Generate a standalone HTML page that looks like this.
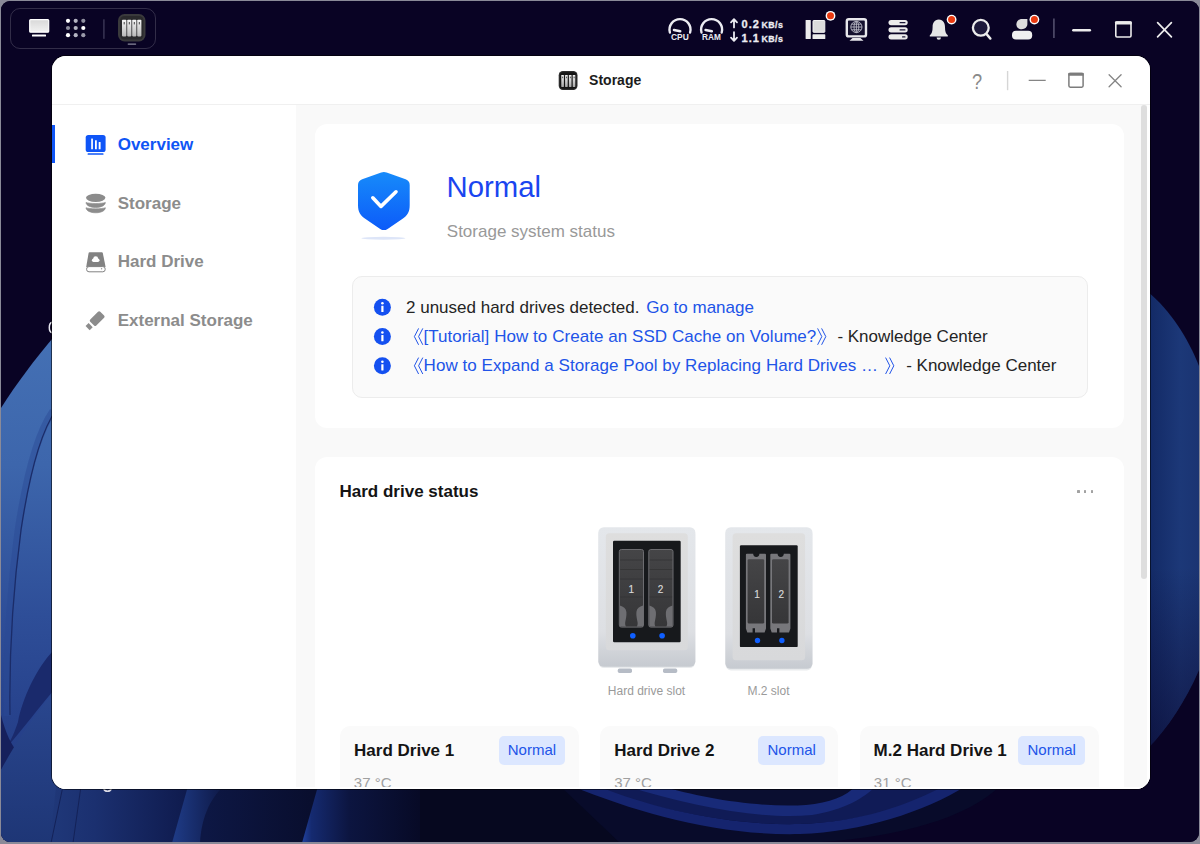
<!DOCTYPE html>
<html>
<head>
<meta charset="utf-8">
<title>Storage</title>
<style>
*{box-sizing:border-box;margin:0;padding:0}
html,body{width:1200px;height:844px;overflow:hidden;background:#8a8a98;font-family:"Liberation Sans",sans-serif}
#frame{position:absolute;left:1px;top:1px;width:1198px;height:841px;border-radius:9px;background:#08031f;overflow:hidden}
#wall{position:absolute;left:0;top:0;width:1198px;height:841px}
.abs{position:absolute}
/* top bar */
#lgroup{position:absolute;left:9px;top:7.4px;width:146.4px;height:40.6px;border:1px solid rgba(255,255,255,.17);border-radius:10px}
/* dialog */
#dlg{position:absolute;left:50.5px;top:55px;width:1098px;height:732.7px;border-radius:14px;background:#fff;overflow:hidden;box-shadow:0 0 0 1px rgba(0,0,0,.55)}
#tbar{position:absolute;left:0;top:0;width:100%;height:49px;background:#fff;border-bottom:1px solid #f0f0f0}
/* #pg uses page coordinates */
#pg{position:absolute;left:-51.5px;top:-56px;width:1200px;height:844px}
#side{position:absolute;left:51.5px;top:105px;width:244.5px;height:690px;background:#fff}
#main{position:absolute;left:296px;top:105px;width:854px;height:690px;background:#f9f9f9}
.nav{position:absolute;left:117.7px;font-size:17px;font-weight:700;color:#8c8c8c;line-height:20px;white-space:nowrap}
.nav.on{color:#0f55f5}
.card{position:absolute;background:#fff;border-radius:12px}
.t{position:absolute;white-space:nowrap;line-height:20px;font-size:17px;color:#242424}
.lnk{color:#2154e8}
.dcard{position:absolute;top:726px;width:238.6px;height:80px;background:#fafafa;border-radius:10px}
.badge{position:absolute;top:735.7px;width:66.6px;height:29.2px;border-radius:5px;background:#dce7ff;color:#2154e8;font-size:15px;line-height:27.6px;text-align:center}
.dt{font-weight:700;color:#141414}
.tmp{font-size:15px;color:#a0a0a0}
.lbl{font-size:12px;color:#9a9a9a;line-height:14px;text-align:center}
</style>
</head>
<body>
<div id="frame">
<svg id="wall" viewBox="1 1 1198 841">
<defs>
<linearGradient id="wl" x1="0" y1="339" x2="0" y2="842" gradientUnits="userSpaceOnUse"><stop offset="0" stop-color="#4470b4"/><stop offset=".25" stop-color="#3d66ac"/><stop offset=".55" stop-color="#2e4e98"/><stop offset=".75" stop-color="#27428c"/><stop offset="1" stop-color="#1f3678"/></linearGradient>
<linearGradient id="wl2" x1="0" y1="0" x2="1" y2="0"><stop offset="0" stop-color="#1a2e6c" stop-opacity=".55"/><stop offset="1" stop-color="#1a2e6c" stop-opacity="0"/></linearGradient>
<linearGradient id="wr" x1="1150" y1="0" x2="1200" y2="0" gradientUnits="userSpaceOnUse"><stop offset="0" stop-color="#132a66"/><stop offset=".6" stop-color="#1c3878"/><stop offset="1" stop-color="#1a3472"/></linearGradient>
<linearGradient id="wrv" x1="0" y1="293" x2="0" y2="750" gradientUnits="userSpaceOnUse"><stop offset="0" stop-color="#0a0428" stop-opacity="0"/><stop offset=".6" stop-color="#0a0428" stop-opacity="0"/><stop offset="1" stop-color="#0a0428" stop-opacity=".55"/></linearGradient>
<linearGradient id="wf" x1="0" y1="690" x2="0" y2="842" gradientUnits="userSpaceOnUse"><stop offset="0" stop-color="#2a478f"/><stop offset="1" stop-color="#1e3676"/></linearGradient>
<linearGradient id="b1" x1="55" y1="0" x2="185" y2="0" gradientUnits="userSpaceOnUse"><stop offset="0" stop-color="#1f3778"/><stop offset=".3" stop-color="#1b3070"/><stop offset="1" stop-color="#0f1b4e"/></linearGradient>
<linearGradient id="b2" x1="175" y1="0" x2="225" y2="0" gradientUnits="userSpaceOnUse"><stop offset="0" stop-color="#1e3a84"/><stop offset="1" stop-color="#0d1744"/></linearGradient>
<linearGradient id="b3" x1="205" y1="0" x2="310" y2="0" gradientUnits="userSpaceOnUse"><stop offset="0" stop-color="#0d1744"/><stop offset="1" stop-color="#090e2e"/></linearGradient>
<linearGradient id="b4" x1="302" y1="0" x2="420" y2="0" gradientUnits="userSpaceOnUse"><stop offset="0" stop-color="#2142a0"/><stop offset=".08" stop-color="#152a70"/><stop offset=".4" stop-color="#0c1540"/><stop offset="1" stop-color="#070a26"/></linearGradient>
</defs>
<rect x="1" y="1" width="1198" height="841" fill="#090324"/>
<!-- left petal -->
<path d="M52 339 C36 358 16 384 1 408 V842 H60 V339 Z" fill="url(#wl)"/>
<path d="M53 411 C39 431 27 471 18 531 C10 591 6 651 7 716" fill="none" stroke="#2a4a94" stroke-width="7" opacity=".45"/>
<path d="M56 410 C42 430 30 470 21 530 C13 590 9 650 10 715" fill="none" stroke="#1b2c68" stroke-width="1.3"/>
<path d="M54 650 C36 668 22 700 18 722 C14 734 10 742 6 748 C24 728 40 706 54 690 Z" fill="#1a2a6c"/>
<path d="M1 715 C6 735 12 745 16 750 L1 770 Z" fill="#16205c"/>
<path d="M1 770 C14 745 36 712 56 690 V842 H1 Z" fill="url(#wf)"/>
<!-- bottom strip -->

<path d="M56 786 H190 L176 843 H50 Z" fill="url(#b1)"/>
<path d="M63 786 L51 843 M81 786 L73 843" stroke="#142258" stroke-width="1" fill="none"/>
<path d="M188 786 H230 V843 H172 Z" fill="url(#b2)"/>
<path d="M224 786 C208 800 201 822 200 843 H320 V786 Z" fill="url(#b3)"/>
<path d="M318 786 L302 843 H620 V786 Z" fill="url(#b4)"/>
<rect x="420" y="786" width="300" height="57" fill="#06081f"/>
<path d="M560 786 H1000 C960 826 860 846 760 843 H620 Z" fill="#080b2a"/>
<path d="M590 786 C650 808 730 826 800 824 C860 822 915 806 950 786 Z" fill="#101b56"/>
<path d="M572 786 C640 814 720 836 800 834 C862 832 924 812 966 786 H944 C906 806 860 822 800 824 C730 826 650 808 598 786 Z" fill="#15246e"/>
<path d="M640 786 C700 802 760 812 806 808 C836 804 854 796 864 786 Z" fill="#0a0e30"/>
<path d="M626 786 C690 806 760 820 812 815 C844 810 864 798 876 786 H856 C846 796 830 803 806 805 C760 808 700 798 662 786 Z" fill="#182a78"/>
<path d="M52 322.2 C48.4 323.4 48.4 331.6 52 332.8" fill="none" stroke="#e6e6ee" stroke-width="1.5"/>
<path d="M103.8 788.5 C104.6 792.2 110.4 792.2 111.2 788.5" fill="none" stroke="#dcdce6" stroke-width="1.6"/>
<!-- right petal -->
<path d="M1148 292 C1170 310 1188 338 1199 366 V670 C1186 700 1168 728 1148 748 Z" fill="url(#wr)"/>
<path d="M1148 292 C1170 310 1188 338 1199 366 V670 C1186 700 1168 728 1148 748 Z" fill="url(#wrv)"/>
</svg>

<div id="lgroup"></div>
<svg class="abs" style="left:0;top:0" width="1198" height="55" viewBox="1 1 1198 55">
<defs>
<linearGradient id="gm" x1="0" y1="0" x2="0" y2="1"><stop offset="0" stop-color="#d8d8d8"/><stop offset="1" stop-color="#f2f2f2"/></linearGradient>
<linearGradient id="gbay" x1="0" y1="0" x2="0" y2="1"><stop offset="0" stop-color="#f4f4f4"/><stop offset="1" stop-color="#b8b8b8"/></linearGradient>
</defs>
<!-- monitor -->
<rect x="29.7" y="19.6" width="19" height="12.6" rx="1" fill="url(#gm)" stroke="#fff" stroke-width="1.2"/>
<rect x="32" y="34.4" width="14" height="2" rx=".5" fill="#fff"/>
<!-- dots -->
<g>
<circle cx="68" cy="20.8" r="2.1" fill="#fff"/><circle cx="75.7" cy="20.8" r="2.1" fill="#b4b4c2"/><circle cx="83.3" cy="20.8" r="2.1" fill="#8e8e9e"/>
<circle cx="68" cy="28" r="2.1" fill="#8e8e9e"/><circle cx="75.7" cy="28" r="2.1" fill="#b4b4c2"/><circle cx="83.3" cy="28" r="2.1" fill="#fff"/>
<circle cx="68" cy="35.2" r="2.1" fill="#fff"/><circle cx="75.7" cy="35.2" r="2.1" fill="#b4b4c2"/><circle cx="83.3" cy="35.2" r="2.1" fill="#9a9aaa"/>
</g>
<rect x="103.2" y="19.3" width="1.4" height="19.5" fill="#3c3856"/>
<!-- app icon -->
<rect x="118" y="14" width="27.5" height="27.5" rx="6.5" fill="#3a3a3c"/>
<rect x="120" y="16" width="23.5" height="23.5" rx="4.5" fill="#2a2a2c"/>
<g fill="url(#gbay)">
<rect x="122" y="19.8" width="4.4" height="16.6" rx=".8"/><rect x="127.2" y="19.8" width="4.2" height="16.6" rx=".8"/><rect x="132.2" y="19.8" width="4.2" height="16.6" rx=".8"/><rect x="137.2" y="19.8" width="4.2" height="16.6" rx=".8"/>
</g>
<g fill="#444"><rect x="123.7" y="22" width="1" height="2.4"/><rect x="128.8" y="22" width="1" height="2.4"/><rect x="133.8" y="22" width="1" height="2.4"/><rect x="138.8" y="22" width="1" height="2.4"/></g>
<rect x="127.6" y="43.4" width="8.6" height="1.3" rx=".6" fill="#8a8a9c"/>

<!-- CPU / RAM gauges -->
<g fill="none" stroke="#ececf2" stroke-linecap="round">
<path d="M669.9 32.5 A10.5 10.5 0 1 1 690.1 32.5" stroke-width="2.4"/>
<path d="M674 30 L680.2 31.2" stroke-width="2.6"/>
<path d="M701.5 32.5 A10.5 10.5 0 1 1 721.7 32.5" stroke-width="2.4"/>
<path d="M705.6 30 L711.8 31.2" stroke-width="2.6"/>
</g>
<g font-family="Liberation Sans, sans-serif" font-weight="700" fill="#ececf2">
<text x="671" y="40" font-size="8.6" textLength="17.8" lengthAdjust="spacingAndGlyphs">CPU</text>
<text x="702" y="40" font-size="8.6" textLength="18.8" lengthAdjust="spacingAndGlyphs">RAM</text>
<g stroke="#ececf2" stroke-width=".3"><text x="741.6" y="28" font-size="11" letter-spacing="1">0.2</text>
<text x="761.6" y="28" font-size="8.8" textLength="21.2" lengthAdjust="spacing">KB/s</text>
<text x="741.6" y="42" font-size="11" letter-spacing="1">1.1</text>
<text x="761.6" y="42" font-size="8.8" textLength="21.2" lengthAdjust="spacing">KB/s</text></g>
</g>
<g fill="none" stroke="#ececf2" stroke-width="1.8" stroke-linecap="round" stroke-linejoin="round">
<path d="M734 27.4 V19.4 M731 22.4 L734 19.2 L737 22.4"/>
<path d="M734 32.2 V40.4 M731 37.6 L734 40.8 L737 37.6"/>
</g>

<!-- layout icon -->
<rect x="805.6" y="20" width="5.2" height="19" rx=".6" fill="#ececec"/>
<rect x="813" y="20.5" width="11.8" height="11.8" rx=".6" fill="#dcdcdc" stroke="#f2f2f2" stroke-width="1"/>
<rect x="812.5" y="34.3" width="12.8" height="4.7" rx=".6" fill="#ececec"/>
<circle cx="830.5" cy="15.8" r="4.9" fill="#fff"/><circle cx="830.5" cy="15.8" r="3.5" fill="#ea3a10"/>
<!-- monitor globe -->
<rect x="846.8" y="19.2" width="19.2" height="17.2" rx="2" fill="#14102e" stroke="#e8e8ec" stroke-width="2.4"/>
<path d="M849.5 40.8 L852.5 38 H860.5 L863.5 40.8 Z" fill="#e8e8ec"/>
<g fill="none" stroke="#b8b8c4" stroke-width=".9"><circle cx="856.4" cy="27" r="5.6"/><ellipse cx="856.4" cy="27" rx="2.4" ry="5.6"/><path d="M850.8 27 H862 M856.4 21.4 V32.6 M851.6 24.2 H861.2 M851.6 29.8 H861.2"/></g>
<!-- server -->
<g fill="#ececec"><rect x="888.5" y="20" width="19.2" height="5.2" rx="2.6"/><rect x="888.5" y="27.2" width="19.2" height="5.2" rx="2.6"/><rect x="888.5" y="34.2" width="19.2" height="5.2" rx="2.6"/></g>
<g fill="#1c1838"><rect x="899.5" y="22" width="6" height="1.3" rx=".6"/><rect x="899.5" y="29.2" width="6" height="1.3" rx=".6"/><rect x="902" y="36.2" width="3.5" height="1.3" rx=".6"/></g>
<!-- bell -->
<path d="M938.8 19.6 C934.2 19.6 932.6 23.6 932.6 27 C932.6 31.5 931.8 33.6 929.8 35.2 V36.4 H947.8 V35.2 C945.8 33.6 945 31.5 945 27 C945 23.6 943.4 19.6 938.8 19.6 Z" fill="#e6e6e6"/>
<path d="M936.6 37.6 H941 A2.2 2.2 0 0 1 936.6 37.6 Z" fill="#e6e6e6"/>
<circle cx="951.6" cy="19.6" r="4.9" fill="#fff"/><circle cx="951.6" cy="19.6" r="3.5" fill="#ea3a10"/>
<!-- search -->
<circle cx="980.8" cy="27.8" r="7.9" fill="#1e1a3c" stroke="#ececec" stroke-width="2.3"/>
<path d="M986.8 34.4 L990.4 38.6" stroke="#ececec" stroke-width="2.4" stroke-linecap="round"/>
<!-- user -->
<path d="M1016.4 24.4 C1016.4 21.2 1018.8 19 1022 19 H1027.4 V23.8 C1027.4 27 1025 29.2 1021.8 29.2 C1018.6 29.2 1016.4 27.4 1016.4 24.4 Z" fill="#dcdcdc"/>
<rect x="1012" y="30.8" width="20.2" height="8.8" rx="4" fill="#f0f0f0"/>
<circle cx="1034.4" cy="19.6" r="4.9" fill="#fff"/><circle cx="1034.4" cy="19.6" r="3.5" fill="#ea3a10"/>
<rect x="1053" y="18.5" width="1.8" height="19.5" fill="#4a4664"/>
<!-- window ctrls -->
<path d="M1073.4 30.2 H1089.8" stroke="#ececec" stroke-width="2.6" stroke-linecap="round"/>
<rect x="1115.8" y="22" width="15.2" height="15" rx="1.2" fill="none" stroke="#ececec" stroke-width="1.6"/>
<rect x="1115" y="21.2" width="16.8" height="3.4" rx="1" fill="#ececec"/>
<path d="M1157.6 22.6 L1171.4 36.8 M1171.4 22.6 L1157.6 36.8" stroke="#ececec" stroke-width="1.7" stroke-linecap="round"/>
</svg>

<div id="dlg">
  <div id="tbar">
<svg class="abs" style="left:0;top:0" width="1098" height="48" viewBox="51.5 56 1098 48">
<defs><linearGradient id="gbay2" x1="0" y1="0" x2="0" y2="1"><stop offset="0" stop-color="#f2f2f2"/><stop offset="1" stop-color="#a8a8a8"/></linearGradient></defs>
<rect x="558.2" y="71" width="18.8" height="19" rx="4.2" fill="#2e2e2e"/>
<rect x="559.4" y="72.2" width="16.4" height="16.6" rx="3" fill="#141414"/>
<g fill="url(#gbay2)"><rect x="560.8" y="75" width="2.6" height="12" rx=".4"/><rect x="564.6" y="75" width="2.6" height="12" rx=".4"/><rect x="568.4" y="75" width="2.6" height="12" rx=".4"/><rect x="572.2" y="75" width="2.6" height="12" rx=".4"/></g>
<g fill="#333"><rect x="561.8" y="76.6" width=".8" height="1.6"/><rect x="565.6" y="76.6" width=".8" height="1.6"/><rect x="569.4" y="76.6" width=".8" height="1.6"/><rect x="573.2" y="76.6" width=".8" height="1.6"/></g>
<text x="588.6" y="85.4" font-family="Liberation Sans, sans-serif" font-size="14" font-weight="700" fill="#1c1c1c">Storage</text>
<text transform="translate(971.6 88.8) scale(.82 1)" font-family="Liberation Sans, sans-serif" font-size="22.2" fill="#8a8a8a">?</text>
<rect x="1006.4" y="71" width="1.4" height="19.2" fill="#d6d6d6"/>
<path d="M1028.2 80.4 H1045.2" stroke="#858585" stroke-width="1.4"/>
<rect x="1068.4" y="73.6" width="14.2" height="13.6" rx="1.4" fill="none" stroke="#7c7c7c" stroke-width="1.5"/>
<rect x="1067.7" y="72.8" width="15.6" height="3" rx="1" fill="#7c7c7c"/>
<path d="M1108.6 74.8 L1120.6 86.8 M1120.6 74.8 L1108.6 86.8" stroke="#858585" stroke-width="1.3" stroke-linecap="round"/>
</svg>
</div>
  <div id="pg">
  <div id="side"></div>
  <div id="main"></div>
  <!-- sidebar -->
  <div class="abs" style="left:51.5px;top:125px;width:3px;height:38.4px;background:#0f55f5"></div>
  <div class="nav on" style="top:135px">Overview</div>
  <div class="nav" style="top:194px">Storage</div>
  <div class="nav" style="top:252px">Hard Drive</div>
  <div class="nav" style="top:311px">External Storage</div>
  <svg class="abs" style="left:80px;top:125px" width="32" height="215" viewBox="80 125 32 215">
    <rect x="85.7" y="135" width="19.9" height="17" rx="2.6" fill="#0f55f7"/>
    <rect x="91.2" y="138.6" width="1.7" height="10.6" rx=".3" fill="#fff"/><rect x="95" y="140.2" width="1.8" height="9" rx=".3" fill="#fff"/><rect x="98.7" y="141.9" width="1.9" height="7.3" rx=".3" fill="#fff"/>
    <rect x="87.6" y="153.3" width="15.9" height="1.4" rx=".5" fill="#0f55f7"/>
    <g fill="#8c8c8c">
      <ellipse cx="95.7" cy="197.8" rx="9.7" ry="4.1"/>
      <path d="M86 202.4 C86 205.4 90.4 207.5 95.7 207.5 C101 207.5 105.4 205.4 105.4 202.4 C103.8 203 99.8 203.5 95.7 203.5 C91.6 203.5 87.6 203 86 202.4 Z" stroke="#8c8c8c" stroke-width=".6"/>
      <path d="M86 207.7 C86 210.7 90.4 212.8 95.7 212.8 C101 212.8 105.4 210.7 105.4 207.7 C103.8 208.3 99.8 208.8 95.7 208.8 C91.6 208.8 87.6 208.3 86 207.7 Z" stroke="#8c8c8c" stroke-width=".6"/>
    </g>
    <path d="M89.6 252.2 H101.8 Q102.6 252.2 102.8 253 L105.6 267 H86.2 L88.6 253 Q88.8 252.2 89.6 252.2 Z" fill="#828282"/>
    <rect x="86.6" y="266.6" width="18.6" height="5.2" rx="2.4" fill="#fff" stroke="#828282" stroke-width="1"/>
    <circle cx="101.6" cy="268.8" r=".7" fill="#999"/>
    <g fill="#fff"><circle cx="95.7" cy="258.6" r="2.4"/><circle cx="93.6" cy="260.3" r="1.7"/><circle cx="97.8" cy="260.3" r="1.7"/><rect x="93.4" y="259.6" width="4.6" height="2.4"/></g>
    <g transform="translate(97.1 318.7) rotate(-45)" fill="#8c8c8c"><rect x="-7" y="-4.3" width="14.2" height="8.6" rx="1.6"/><rect x="-13.4" y="-2.9" width="4.3" height="5.8"/></g>
  </svg>

  <!-- card 1 -->
  <div class="card" style="left:314.5px;top:124px;width:809.5px;height:304px"></div>
  <svg class="abs" style="left:350px;top:165px" width="70" height="80" viewBox="350 165 70 80">
    <defs><linearGradient id="gsh" x1="0" y1="0" x2="0" y2="1"><stop offset="0" stop-color="#178bfa"/><stop offset="1" stop-color="#0c5bf9"/></linearGradient></defs>
    <ellipse cx="383.4" cy="238.2" rx="22" ry="1.5" fill="#dde5f8"/>
    <path d="M381.2 172.6 Q383.9 171.4 386.6 172.6 L405.6 179.2 Q409.7 180.8 409.7 185 V205 C409.7 212 407.4 215.4 402.6 218.8 L387.6 228.9 Q383.9 231.3 380.2 228.9 L365.2 218.8 C360.4 215.4 358 212 358 205 V185 Q358 180.8 362.2 179.2 Z" fill="url(#gsh)"/>
    <path d="M372.8 197.8 L381 206.4 L396 191.8" fill="none" stroke="#fff" stroke-width="3.6" stroke-linecap="round" stroke-linejoin="round"/>
  </svg>
  <div class="t" style="left:446.6px;top:169.5px;font-size:29.3px;line-height:34px;color:#1a45f0">Normal</div>
  <div class="t" style="left:446.8px;top:222px;color:#999">Storage system status</div>

  <div class="abs" style="left:352px;top:276.3px;width:735.5px;height:121.4px;border:1px solid #ececec;border-radius:10px;background:#fafafa"></div>
  <svg class="abs" style="left:370px;top:295px" width="25" height="85" viewBox="370 295 25 85">
    <g id="inf"><circle cx="382.4" cy="307.3" r="8.5" fill="#1450f0"/><rect x="381.3" y="305.8" width="2.2" height="6.2" rx=".3" fill="#fff"/><circle cx="382.4" cy="303.3" r="1.3" fill="#fff"/></g>
    <use href="#inf" y="29.2"/><use href="#inf" y="58.4"/>
  </svg>
  <div class="t" style="left:406px;top:298px">2 unused hard drives detected.</div>
  <div class="t lnk" style="left:646.2px;top:298px">Go to manage</div>
  <div class="t lnk" style="left:423.4px;top:327px;letter-spacing:.05px">[Tutorial] How to Create an SSD Cache on Volume?</div>
  <div class="t" style="left:837.4px;top:327px">- Knowledge Center</div>
  <div class="t lnk" style="left:423.6px;top:356px;letter-spacing:.05px">How to Expand a Storage Pool by Replacing Hard Drives …</div>
  <div class="t" style="left:906.2px;top:356px">- Knowledge Center</div>
  <svg class="abs" style="left:410px;top:325px" width="490" height="52" viewBox="410 325 490 52" fill="none" stroke="#2154e8" stroke-width="1">
    <path id="lq" d="M418.6 328.4 L414.4 336.6 L418.6 344.8 M422.8 328.4 L418.6 336.6 L422.8 344.8"/>
    <use href="#lq" y="29.2"/>
    <path d="M817.6 328.4 L821.8 336.6 L817.6 344.8 M821.6 328.4 L825.8 336.6 L821.6 344.8"/>
    <path d="M885.6 357.6 L889.8 365.8 L885.6 374 M889.6 357.6 L893.8 365.8 L889.6 374"/>
  </svg>

  <!-- card 2 -->
  <div class="card" style="left:314.5px;top:456.6px;width:809.5px;height:360px"></div>
  <div class="t dt" style="left:339.5px;top:481.5px">Hard drive status</div>
  <div class="abs" style="left:1077.1px;top:490.2px;width:2.5px;height:2.5px;background:#a2a2a2;border-radius:.6px"></div>
  <div class="abs" style="left:1083.9px;top:490.2px;width:2.5px;height:2.5px;background:#a2a2a2;border-radius:.6px"></div>
  <div class="abs" style="left:1090.7px;top:490.2px;width:2.5px;height:2.5px;background:#a2a2a2;border-radius:.6px"></div>

  <svg class="abs" style="left:590px;top:520px" width="240" height="160" viewBox="590 520 240 160">
    <defs>
      <linearGradient id="gb" x1="0" y1="0" x2="0" y2="1"><stop offset="0" stop-color="#e4e7eb"/><stop offset=".75" stop-color="#dddfe3"/><stop offset="1" stop-color="#c6cad0"/></linearGradient>
      <linearGradient id="gp" x1="0" y1="0" x2="0" y2="1"><stop offset="0" stop-color="#dedede"/><stop offset="1" stop-color="#d8d9db"/></linearGradient>
      <linearGradient id="gd" x1="0" y1="0" x2="0" y2="1"><stop offset="0" stop-color="#454547"/><stop offset="1" stop-color="#363638"/></linearGradient>
    </defs>
    <!-- HDD device -->
    <rect x="617.8" y="668.6" width="14.2" height="4.3" rx="1.6" fill="#b6bcc6"/><rect x="663" y="668.6" width="14.2" height="4.3" rx="1.6" fill="#b6bcc6"/>
    <rect x="598.6" y="528.4" width="96.5" height="139.6" rx="5.5" fill="#d4d7dc" opacity=".5"/><rect x="598.3" y="527.2" width="97.1" height="139.6" rx="5.5" fill="url(#gb)"/>
    <rect x="605.8" y="533.2" width="82" height="117" rx="3.5" fill="url(#gp)"/>
    <rect x="613" y="540.7" width="67.7" height="101.6" rx="1.2" fill="#17191c"/>
    <g id="hd">
      <rect x="619.3" y="549.5" width="24.2" height="77.6" rx="2" fill="url(#gd)" stroke="#6c6c70" stroke-width="1"/>
      <path d="M620.2 560 H642.6 M620.2 569.5 H642.6 M620.2 579 H642.6 M620.2 597 H642.6" stroke="#333335" stroke-width=".8"/>
      <path d="M619.8 605.6 C623.4 606.6 626 608.6 626.4 612 C626.8 616 625.6 619.5 625.2 622.5 C625 624.5 625.4 625.6 626 626.6 H619.8 Z M643 605.6 C639.4 606.6 636.8 608.6 636.4 612 C636 616 637.2 619.5 637.6 622.5 C637.8 624.5 637.4 625.6 636.8 626.6 H643 Z" fill="#6e6e72"/>
    </g>
    <use href="#hd" x="29.5"/>
    <circle cx="632.8" cy="635.7" r="2.8" fill="#0f5fff"/><circle cx="662.1" cy="635.7" r="2.8" fill="#0f5fff"/>
    <g font-family="Liberation Sans, sans-serif" font-size="10" fill="#dadada" text-anchor="middle" font-weight="400" stroke="#dadada" stroke-width=".15"><text x="631.2" y="592.6">1</text><text x="660.6" y="592.6">2</text></g>
    <!-- M.2 device -->
    <rect x="725.6" y="528.4" width="86.6" height="142" rx="5.5" fill="#d4d7dc" opacity=".5"/><rect x="725.3" y="527.2" width="87.2" height="141.6" rx="5.5" fill="url(#gb)"/>
    <rect x="732.6" y="533.2" width="72.5" height="127" rx="3.5" fill="url(#gp)"/>
    <rect x="739.9" y="545.3" width="57.8" height="101.8" rx="1.2" fill="#17191c"/>
    <g id="m2">
      <path d="M746.9 553.8 H753.2 A3.1 3.1 0 0 0 759.4 553.8 H765 Q766 553.8 766 554.8 V628.6 L764.6 632.6 H755 V628.3 H752.6 V632.6 H747.3 L745.9 628.6 V554.8 Q745.9 553.8 746.9 553.8 Z" fill="#77777b"/>
      <rect x="747.6" y="559.2" width="16.6" height="64.4" rx="1.4" fill="url(#gd)"/>
    </g>
    <use href="#m2" x="24.4"/>
    <circle cx="757.5" cy="640.5" r="2.7" fill="#0f5fff"/><circle cx="781.9" cy="640.5" r="2.7" fill="#0f5fff"/>
    <g font-family="Liberation Sans, sans-serif" font-size="10" fill="#dadada" text-anchor="middle" font-weight="400" stroke="#dadada" stroke-width=".15"><text x="757" y="597.6">1</text><text x="781.4" y="597.6">2</text></g>
  </svg>
  <div class="t lbl" style="left:596.5px;top:684px;width:100px">Hard drive slot</div>
  <div class="t lbl" style="left:718.5px;top:684px;width:100px">M.2 slot</div>

  <div class="dcard" style="left:340.2px"></div>
  <div class="dcard" style="left:599.8px"></div>
  <div class="dcard" style="left:860.2px"></div>
  <div class="t dt" style="left:354.1px;top:741px">Hard Drive 1</div>
  <div class="t dt" style="left:614.2px;top:741px">Hard Drive 2</div>
  <div class="t dt" style="left:873.6px;top:741px">M.2 Hard Drive 1</div>
  <div class="badge" style="left:498.6px">Normal</div>
  <div class="badge" style="left:758.4px">Normal</div>
  <div class="badge" style="left:1018.4px">Normal</div>
  <div class="t tmp" style="left:353.8px;top:773px">37 °C</div>
  <div class="t tmp" style="left:614.2px;top:773px">37 °C</div>
  <div class="t tmp" style="left:873.8px;top:773px">31 °C</div>

  <div class="abs" style="left:51.5px;top:786.7px;width:1100px;height:6px;background:#fff"></div>
  <!-- scrollbar -->
  <div class="abs" style="left:1147.4px;top:105px;width:3px;height:690px;background:#fff"></div>
  <div class="abs" style="left:1140.8px;top:105.4px;width:6.3px;height:473.6px;border-radius:3.2px;background:#dedede"></div>
  </div>
</div>
</div>
</body>
</html>
